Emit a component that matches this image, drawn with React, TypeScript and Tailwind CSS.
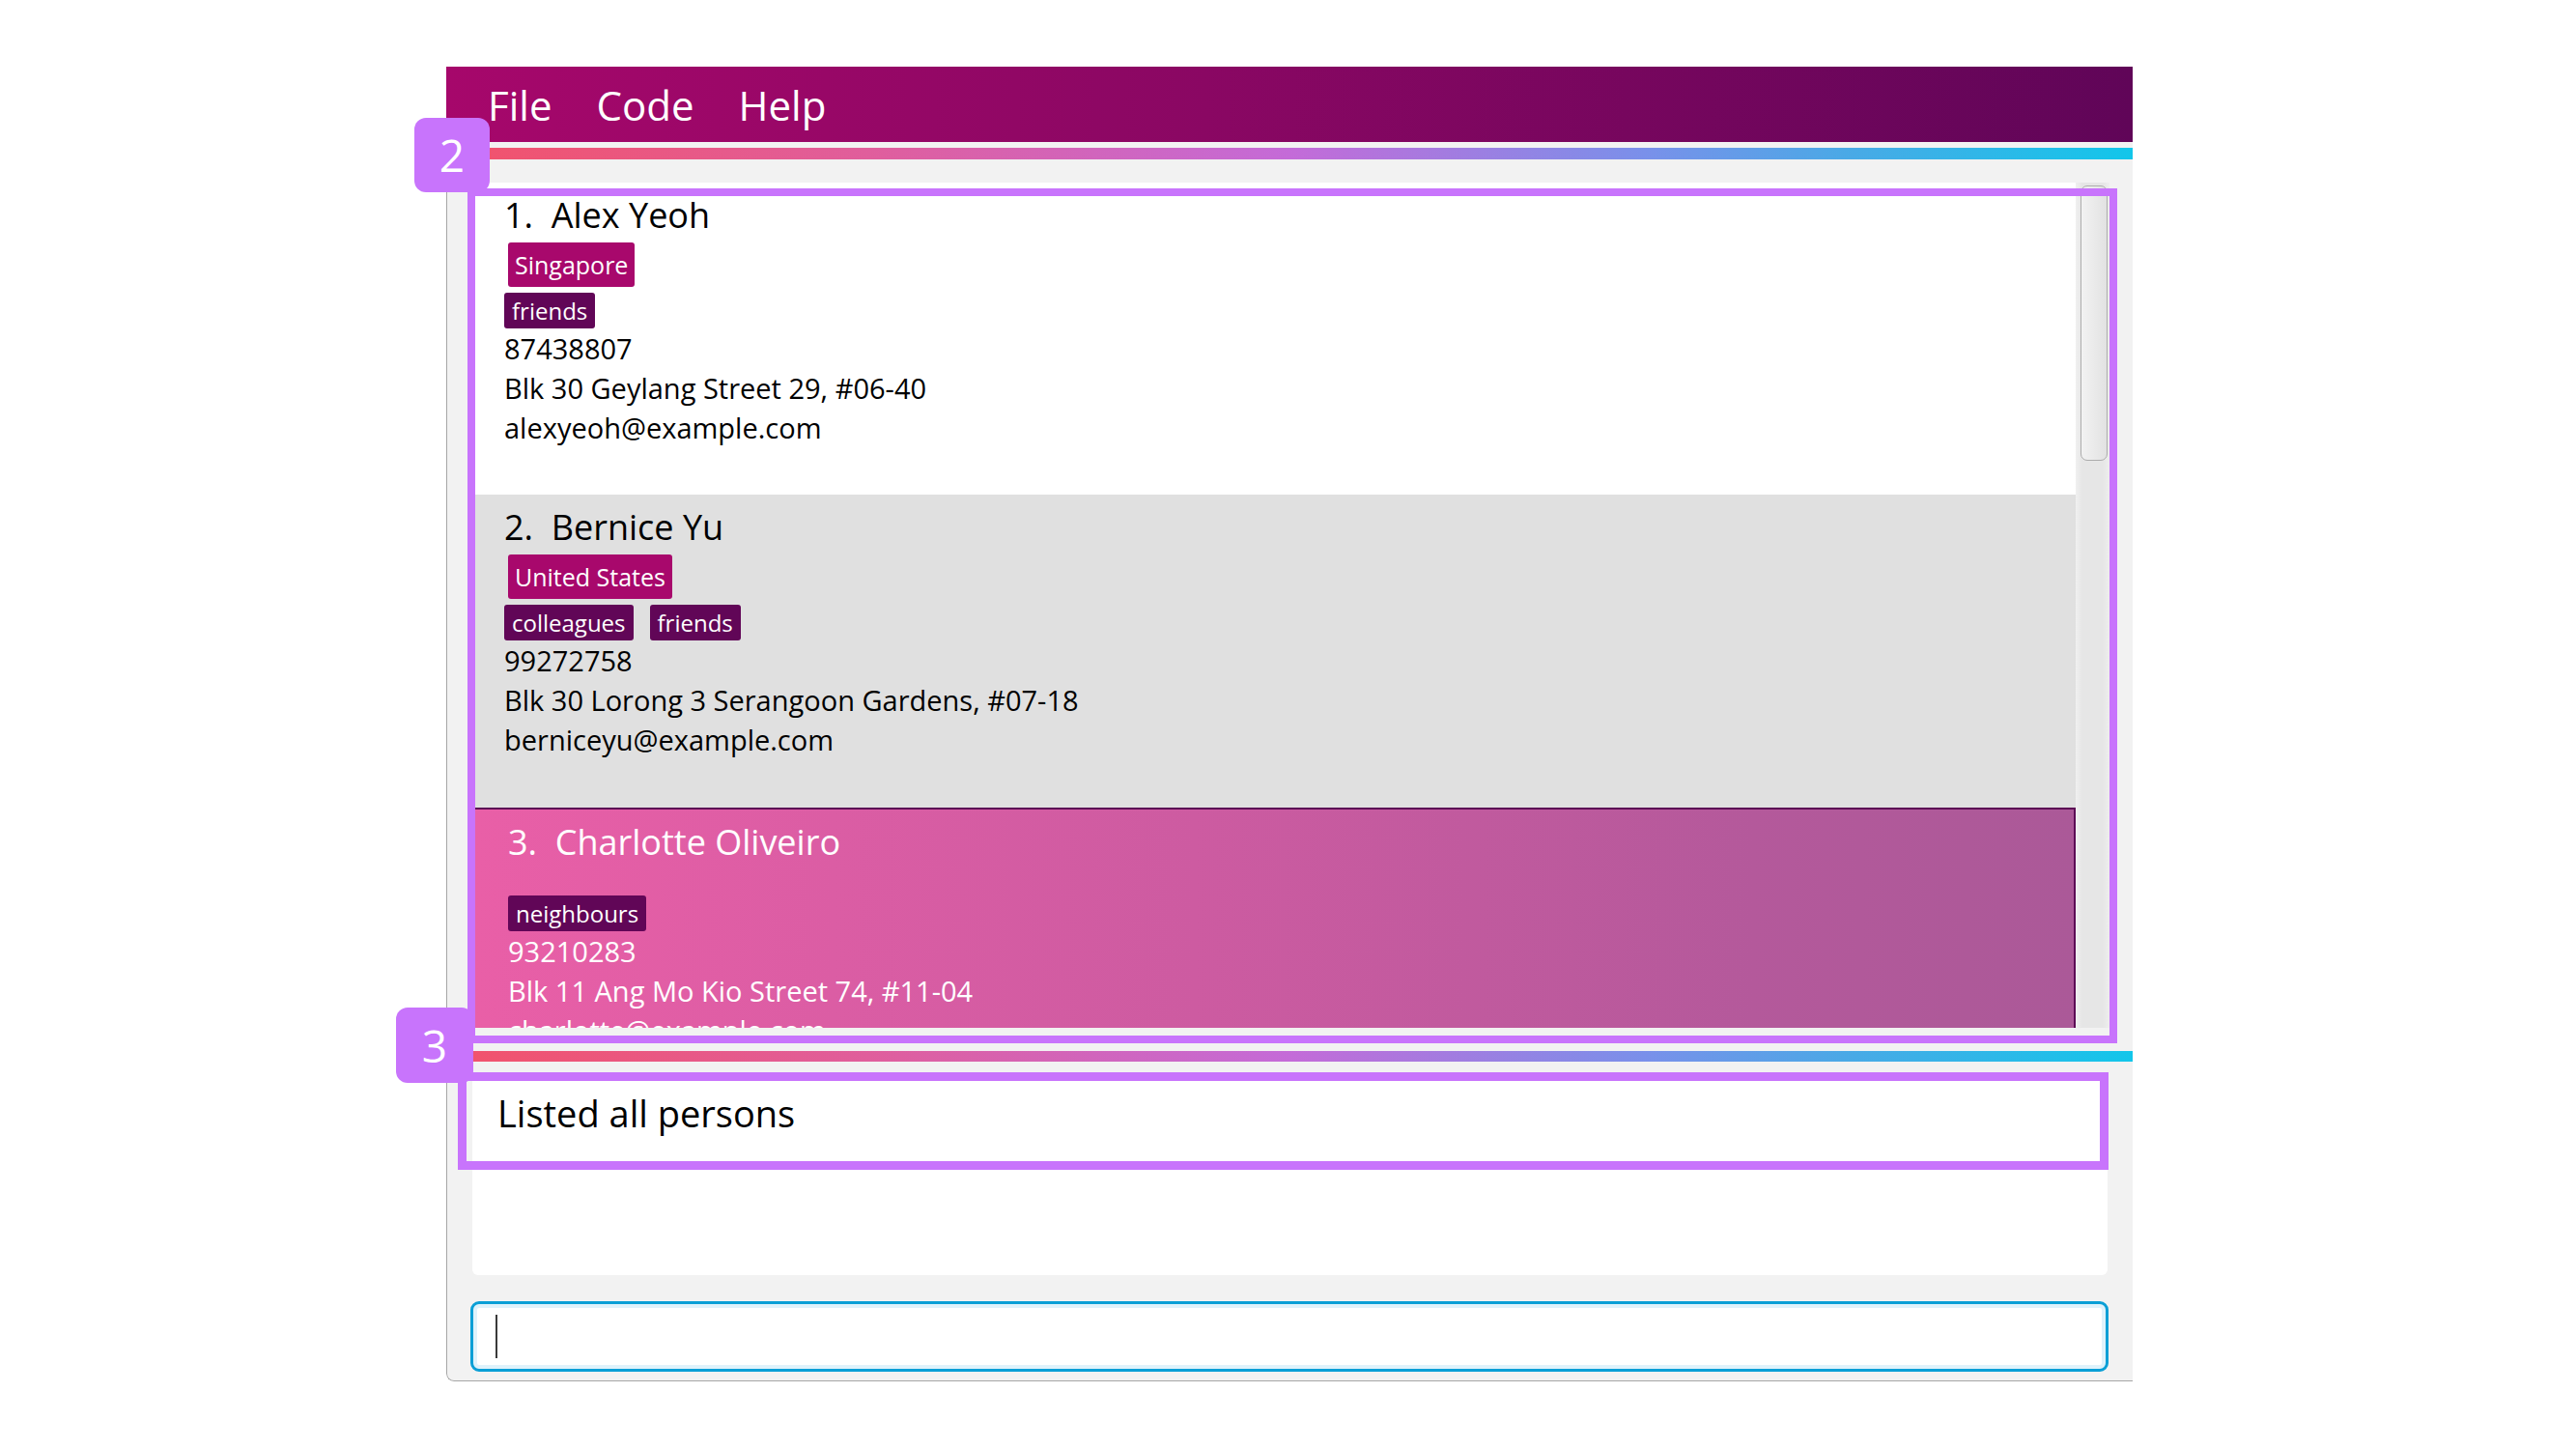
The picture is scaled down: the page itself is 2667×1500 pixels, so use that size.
import React from 'react';

const FONT = "font-['Open_Sans',_'Noto_Sans',_sans-serif]";

interface Person {
    index: number;
    name: string;
    country?: string;
    tags: string[];
    phone: string;
    address: string;
    email: string;
}

const people: Person[] = [
    {
        index: 1,
        name: 'Alex Yeoh',
        country: 'Singapore',
        tags: ['friends'],
        phone: '87438807',
        address: 'Blk 30 Geylang Street 29, #06-40',
        email: 'alexyeoh@example.com',
    },
    {
        index: 2,
        name: 'Bernice Yu',
        country: 'United States',
        tags: ['colleagues', 'friends'],
        phone: '99272758',
        address: 'Blk 30 Lorong 3 Serangoon Gardens, #07-18',
        email: 'berniceyu@example.com',
    },
    {
        index: 3,
        name: 'Charlotte Oliveiro',
        tags: ['neighbours'],
        phone: '93210283',
        address: 'Blk 11 Ang Mo Kio Street 74, #11-04',
        email: 'charlotte@example.com',
    },
];

function PersonCard({ person, variant }: { person: Person; variant: 'odd' | 'even' | 'selected' }) {
    const shell =
        variant === 'odd'
            ? 'bg-white h-[323px] pl-[32px] text-black'
            : variant === 'even'
              ? 'bg-[#e0e0e0] h-[324px] pl-[32px] text-black'
              : 'h-[330px] pl-[34px] text-white border-2 border-[#5c0a55] bg-[linear-gradient(90deg,#e95fa7_0%,#cd5ba1_45%,#b4599b_80%,#ab5998_100%)]';

    return (
        <div className={`shrink-0 flex flex-col ${shell}`}>
            <div className="mt-[10px] h-[48px] leading-[48px] text-[36px] whitespace-nowrap">
                {person.index}.&nbsp;&nbsp;{person.name}
            </div>
            {person.country ? (
                <div className="mt-[4px] ml-[4px] flex">
                    <span className="h-[46px] leading-[46px] px-[7px] rounded-[3px] bg-[#a8086c] text-white text-[25px]">
                        {person.country}
                    </span>
                </div>
            ) : (
                <div className="mt-[4px] h-[21px]" />
            )}
            <div className="mt-[6px] flex gap-[17px]">
                {person.tags.map((t) => (
                    <span
                        key={t}
                        className="h-[37px] leading-[37px] px-[8px] rounded-[3px] bg-[#610657] text-white text-[24px]"
                    >
                        {t}
                    </span>
                ))}
            </div>
            <div className="text-[29px] leading-[41px] whitespace-nowrap">
                <div>{person.phone}</div>
                <div>{person.address}</div>
                <div>{person.email}</div>
            </div>
        </div>
    );
}

function GradientBar({ h }: { h: string }) {
    return (
        <div
            className={`${h} shrink-0 bg-[linear-gradient(90deg,#f2526a_0%,#e05e9c_25%,#c46bd8_50%,#7a90ea_71%,#4aa9e6_83%,#12c6ea_100%)]`}
        />
    );
}

function Label({ n, pos }: { n: string; pos: string }) {
    return (
        <div
            className={`absolute ${pos} rounded-[12px] bg-[#c874fc] text-white text-[46px] flex items-center justify-center`}
        >
            {n}
        </div>
    );
}

export default function App() {
    return (
        <div className={`relative w-[2667px] h-[1500px] bg-white pt-[69px] pl-[462px] ${FONT}`}>
            <div className="w-[1746px] h-[1361px] flex flex-col bg-[#f2f2f2] rounded-bl-[8px] overflow-hidden">
                {/* menu bar */}
                <div className="h-[78px] shrink-0 flex items-center pl-[43px] gap-[46px] bg-[linear-gradient(90deg,#a6076b,#8a0763_45%,#600558)] text-white text-[42px]">
                    <span>File</span>
                    <span>Code</span>
                    <span>Help</span>
                </div>

                <div className="flex-1 flex flex-col border-l border-b border-[#a6a6a6] rounded-bl-[8px]">
                    <div className="h-[6px] shrink-0" />
                    <GradientBar h="h-[12px]" />
                    <div className="h-[24px] shrink-0" />

                    {/* person list */}
                    <div className="ml-[27px] w-[1694px] h-[875px] shrink-0 flex">
                        <div className="w-[1659px] h-full overflow-hidden flex flex-col">
                            <PersonCard person={people[0]} variant="odd" />
                            <PersonCard person={people[1]} variant="even" />
                            <PersonCard person={people[2]} variant="selected" />
                        </div>
                        <div className="w-[35px] h-full bg-[linear-gradient(90deg,#f0f0f0,#e6e6e6_20%,#e6e6e6_80%,#eeeeee)] pt-[3px] pl-[5px] pr-[2px]">
                            <div className="h-[285px] rounded-[7px] border border-[#acacac] bg-[linear-gradient(90deg,#f2f2f2,#e2e2e2)]" />
                        </div>
                    </div>

                    <div className="h-[24px] shrink-0" />
                    <GradientBar h="h-[11px]" />
                    <div className="h-[12px] shrink-0" />

                    {/* result display */}
                    <div className="ml-[26px] w-[1693px] h-[209px] shrink-0 bg-white rounded-b-[6px] pl-[26px] pt-[16px]">
                        <div className="text-[38px] leading-[50px] text-black">Listed all persons</div>
                    </div>

                    <div className="h-[27px] shrink-0" />

                    {/* command box */}
                    <div className="ml-[24px] w-[1696px] h-[73px] shrink-0 rounded-[9px] border-[3px] border-[#0a9fd6] bg-white shadow-[inset_0_0_0_4px_#dff2fb] flex items-center pl-[23px]">
                        <div className="w-[2px] h-[45px] bg-[#3a3a3a]" />
                    </div>
                </div>
            </div>

            {/* annotation overlays */}
            <div className="absolute left-[484px] top-[195px] w-[1708px] h-[885px] border-[8px] border-[#c874fc]" />
            <div className="absolute left-[474px] top-[1110px] w-[1709px] h-[101px] border-[9px] border-[#c874fc]" />
            <Label n="2" pos="left-[429px] top-[122px] w-[78px] h-[77px]" />
            <Label n="3" pos="left-[410px] top-[1043px] w-[80px] h-[78px]" />
        </div>
    );
}
